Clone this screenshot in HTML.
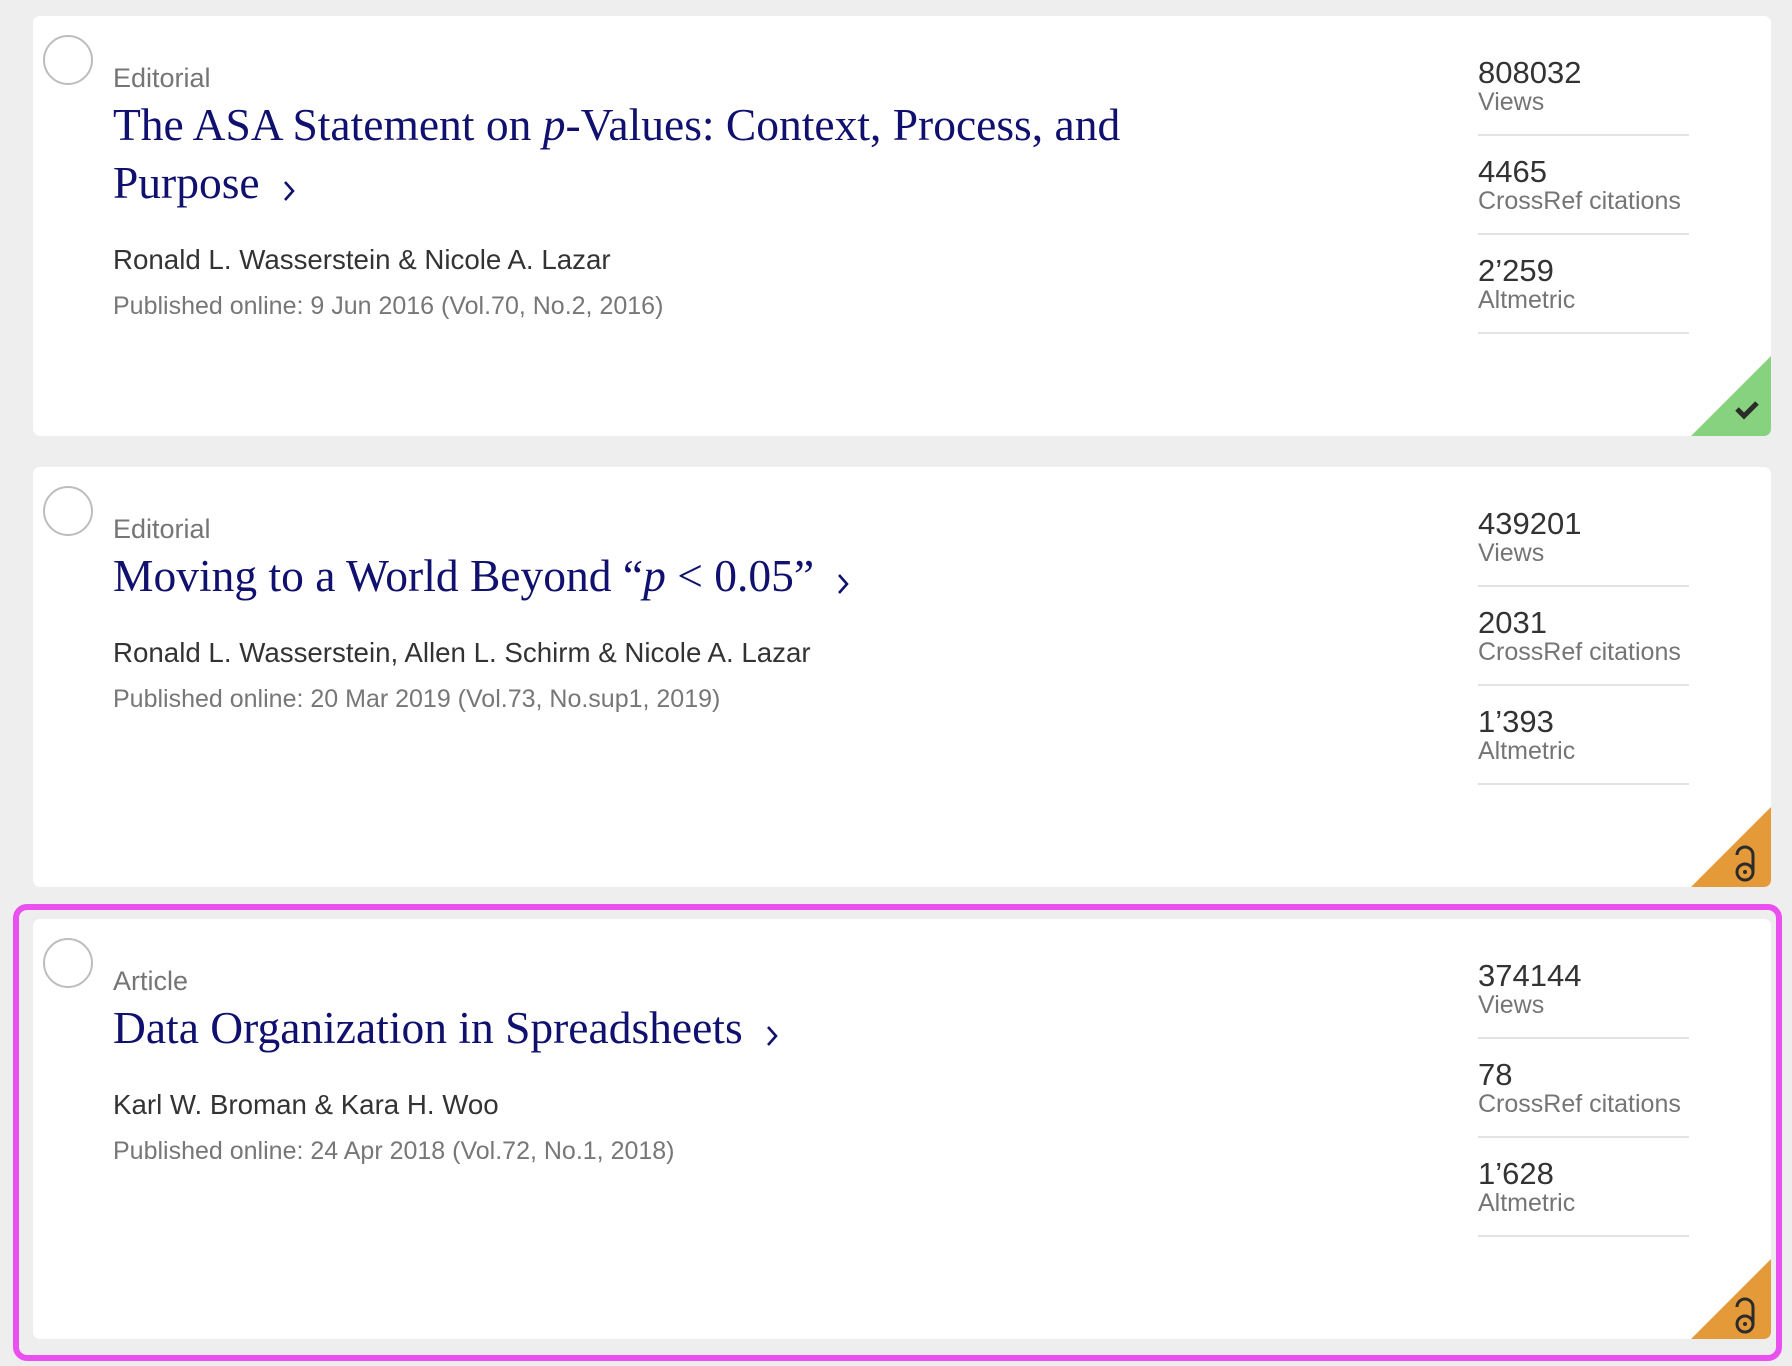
<!DOCTYPE html>
<html><head><meta charset="utf-8"><style>
html,body{margin:0;padding:0;}
body{width:1792px;height:1366px;background:#eeeeee;position:relative;overflow:hidden;font-family:"Liberation Sans",sans-serif;}
.card{position:absolute;left:33px;width:1738px;height:420px;background:#fff;border-radius:7px;overflow:hidden;}
.circ{position:absolute;left:10px;top:19px;width:46px;height:46px;border:2px solid #bdbdbd;border-radius:50%;}
.main{position:absolute;left:80px;top:49px;width:1200px;}
.type{font-size:27px;line-height:27px;color:#757575;}
.title{margin-top:4px;font-family:"Liberation Serif",serif;font-size:45.5px;line-height:58px;color:#10106e;}
.title svg{margin-left:22px;vertical-align:-4px;}
.auth{margin-top:34px;font-size:27.7px;line-height:27px;color:#333;}
.pub{margin-top:21px;font-size:25px;line-height:25px;color:#777;}
.stats{position:absolute;left:1445px;top:41px;width:211px;}
.st{border-bottom:2px solid #e3e3e3;padding-bottom:19px;margin-bottom:20px;}
.num{font-size:31px;line-height:31px;color:#333;}
.lab{margin-top:2px;font-size:25px;line-height:25px;color:#757575;}
.tri{position:absolute;right:0;bottom:0;width:80px;height:80px;}
.hl{position:absolute;left:13px;top:904px;width:1757px;height:445px;border:6px solid #ea4ff0;border-radius:14px;}
</style></head><body>

<div class="card" style="top:16px">
<div class="circ"></div>
<div class="main">
<div class="type">Editorial</div>
<div class="title">The ASA Statement on <i>p</i>-Values: Context, Process, and<br>Purpose<svg width="14" height="24" viewBox="0 0 14 24"><path d="M3 4 L11 13 L3 22" fill="none" stroke="#10106e" stroke-width="2.6"/></svg></div>
<div class="auth">Ronald L. Wasserstein &amp; Nicole A. Lazar</div>
<div class="pub">Published online: 9 Jun 2016 (Vol.70, No.2, 2016)</div>
</div>
<div class="stats">
<div class="st"><div class="num">808032</div><div class="lab">Views</div></div>
<div class="st"><div class="num">4465</div><div class="lab">CrossRef citations</div></div>
<div class="st"><div class="num">2’259</div><div class="lab">Altmetric</div></div>
</div>
<svg class="tri" viewBox="0 0 80 80"><polygon points="80,0 80,80 0,80" fill="#86d27f"/><path d="M46 53 L53 60 L66 47" fill="none" stroke="#2b2b2b" stroke-width="5"/></svg>
</div>

<div class="card" style="top:467px">
<div class="circ"></div>
<div class="main">
<div class="type">Editorial</div>
<div class="title">Moving to a World Beyond “<i>p</i> &lt; 0.05”<svg width="14" height="24" viewBox="0 0 14 24"><path d="M3 4 L11 13 L3 22" fill="none" stroke="#10106e" stroke-width="2.6"/></svg></div>
<div class="auth">Ronald L. Wasserstein, Allen L. Schirm &amp; Nicole A. Lazar</div>
<div class="pub">Published online: 20 Mar 2019 (Vol.73, No.sup1, 2019)</div>
</div>
<div class="stats">
<div class="st"><div class="num">439201</div><div class="lab">Views</div></div>
<div class="st"><div class="num">2031</div><div class="lab">CrossRef citations</div></div>
<div class="st"><div class="num">1’393</div><div class="lab">Altmetric</div></div>
</div>
<svg class="tri" viewBox="0 0 80 80"><polygon points="80,0 80,80 0,80" fill="#e59a3a"/><circle cx="54" cy="65" r="8" fill="none" stroke="#2b2b2b" stroke-width="3"/><path d="M62 65 V48 A8 8 0 0 0 46 48" fill="none" stroke="#2b2b2b" stroke-width="3"/><circle cx="54" cy="65" r="2" fill="#2b2b2b"/></svg>
</div>

<div class="card" style="top:919px">
<div class="circ"></div>
<div class="main">
<div class="type">Article</div>
<div class="title">Data Organization in Spreadsheets<svg width="14" height="24" viewBox="0 0 14 24"><path d="M3 4 L11 13 L3 22" fill="none" stroke="#10106e" stroke-width="2.6"/></svg></div>
<div class="auth">Karl W. Broman &amp; Kara H. Woo</div>
<div class="pub">Published online: 24 Apr 2018 (Vol.72, No.1, 2018)</div>
</div>
<div class="stats">
<div class="st"><div class="num">374144</div><div class="lab">Views</div></div>
<div class="st"><div class="num">78</div><div class="lab">CrossRef citations</div></div>
<div class="st"><div class="num">1’628</div><div class="lab">Altmetric</div></div>
</div>
<svg class="tri" viewBox="0 0 80 80"><polygon points="80,0 80,80 0,80" fill="#e59a3a"/><circle cx="54" cy="65" r="8" fill="none" stroke="#2b2b2b" stroke-width="3"/><path d="M62 65 V48 A8 8 0 0 0 46 48" fill="none" stroke="#2b2b2b" stroke-width="3"/><circle cx="54" cy="65" r="2" fill="#2b2b2b"/></svg>
</div>

<div class="hl"></div>
</body></html>
